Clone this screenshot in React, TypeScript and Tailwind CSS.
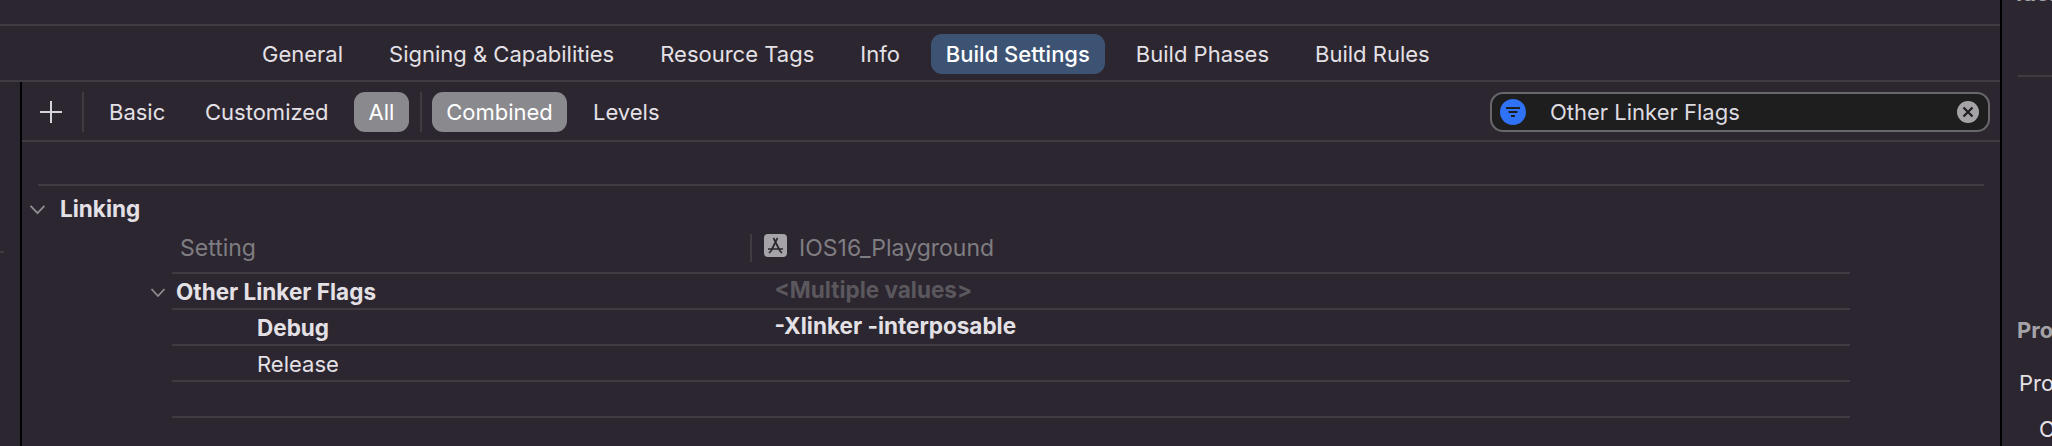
const tabs = ['General', 'Signing & Capabilities', 'Resource Tags', 'Info', 'Build Settings', 'Build Phases', 'Build Rules'];

function Chevron({ className }: { className: string }) {
  return (
    <svg viewBox="0 0 16 10" fill="none" stroke="#8e8c90" strokeWidth="1.8" className={className}>
      <path d="M1.5 1.5 8 8.5l6.5-7" />
    </svg>
  );
}

function AppIcon() {
  return (
    <svg viewBox="0 0 23 23" className="w-[23px] h-[23px] shrink-0 mb-[5px]">
      <rect width="23" height="23" rx="4" fill="#a5a3a7" />
      <path d="M13.5 4 7 17M9.5 4 16 17M4 15h15M5 19l2-2M18 19l-2-2" stroke="#2c2630" strokeWidth="1.7" fill="none" />
    </svg>
  );
}

function Row({ name, value, nameClass, valueClass }: { name?: string; value?: string; nameClass?: string; valueClass?: string }) {
  return (
    <div className="h-9 shrink-0 flex items-center pt-0.5 border-b-2 border-[#403b43] w-[1678px] text-[22px] text-[#e4e1e6]">
      <div className={`w-[602.5px] shrink-0 whitespace-nowrap ${nameClass ?? ''}`}>{name}</div>
      <div className={`whitespace-nowrap ${valueClass ?? ''}`}>{value}</div>
    </div>
  );
}

export default function App() {
  return (
    <div className="w-[2052px] h-[446px] bg-[#2c2630] overflow-hidden flex font-['Inter','Liberation_Sans',sans-serif] text-[#e4e1e6]">
      <div className="w-[2000px] shrink-0 flex flex-col">
        {/* tab bar */}
        <div className="h-[24px] shrink-0 border-b-2 border-[#403b43] box-content" />
        <div className="h-[52px] shrink-0 border-b-2 border-[#403b43] box-content flex items-center pl-[247px] pt-0.5 gap-4 text-[22px]">
          {tabs.map((t) => (
            <div
              key={t}
              className={`h-10 px-[15px] flex items-center rounded-[11px] whitespace-nowrap ${t === 'Build Settings' ? 'bg-[#3d5373] text-white font-medium' : ''}`}
            >
              {t}
            </div>
          ))}
        </div>

        <div className="flex-1 flex min-h-0">
          <div className="w-5 shrink-0 pt-[169px]">
            <div className="w-1 h-0.5 bg-[#403b43]" />
          </div>
          <div className="w-0.5 shrink-0 bg-black" />
          <div className="flex-1 flex flex-col min-w-0">
            {/* filter bar */}
            <div className="h-[56px] shrink-0 border-b-2 border-[#403b43] box-content flex items-center pt-0.5 text-[22px]">
              <div className="w-[62px] h-10 shrink-0 border-r-2 border-[#403b43] flex items-center pl-[18px]">
                <svg viewBox="0 0 22 22" className="w-[22px] h-[22px]" stroke="#d6d3d8" strokeWidth="2">
                  <path d="M11 0v22M0 11h22" />
                </svg>
              </div>
              <div className="pl-[25px] w-[121px] shrink-0">Basic</div>
              <div className="w-[149px] shrink-0">Customized</div>
              <div className="w-[55px] h-10 rounded-[11px] bg-[#8a898e] text-white flex items-center justify-center shrink-0">All</div>
              <div className="w-0.5 h-10 bg-[#403b43] ml-[11px] mr-[10px] shrink-0" />
              <div className="w-[135px] h-10 rounded-[11px] bg-[#8a898e] text-white flex items-center justify-center shrink-0">Combined</div>
              <div className="ml-[26px]">Levels</div>
              <div className="ml-auto mr-[10px] w-[500px] h-10 rounded-[13px] border-2 border-[#69676b] bg-[#1e1e1e] flex items-center pl-2 pr-[9px]">
                <div className="w-[26px] h-[26px] rounded-full bg-[#2f72f5] flex items-center justify-center shrink-0">
                  <svg viewBox="0 0 16 12" className="w-4 h-3" fill="#1e1e1e">
                    <rect x="1" y="1" width="14" height="2" />
                    <rect x="3.5" y="5" width="9" height="2" />
                    <rect x="6" y="9" width="4" height="2" />
                  </svg>
                </div>
                <span className="ml-[24px] text-[#dedbe0]">Other Linker Flags</span>
                <div className="ml-auto w-[22px] h-[22px] rounded-full bg-[#a5a3a7] flex items-center justify-center shrink-0">
                  <svg viewBox="0 0 12 12" className="w-3 h-3" stroke="#1e1e1e" strokeWidth="2.2">
                    <path d="M1.5 1.5l9 9M10.5 1.5l-9 9" />
                  </svg>
                </div>
              </div>
            </div>

            {/* settings table */}
            <div className="h-[42px] shrink-0 w-[1946px] ml-4 border-b-2 border-[#403b43] box-content" />
            <div className="flex-1 flex flex-col">
              <div className="h-[46px] shrink-0 flex items-center font-bold text-[22.5px]">
                <Chevron className="w-[17px] h-[11px] ml-[7px]" />
                <span className="ml-[14px]">Linking</span>
              </div>
              <div className="ml-[150px] flex flex-col">
                <div className="h-[42px] shrink-0 flex items-center border-b-2 border-[#403b43] w-[1678px] pb-2 text-[23px] text-[#7f7d82]">
                  <div className="w-[578px] pl-2 shrink-0">Setting</div>
                  <div className="w-0.5 h-7 bg-[#403b43] mr-[12px] shrink-0" />
                  <AppIcon />
                  <span className="ml-3">IOS16_Playground</span>
                </div>
                <div className="relative">
                  <Chevron className="absolute -left-[22px] top-[13px] w-[16px] h-[11px]" />
                  <Row name="Other Linker Flags" nameClass="font-bold pl-1 text-[22.5px]" value="<Multiple values>" valueClass="font-bold text-[#5a585d] mb-1 text-[22.5px]" />
                </div>
                <Row name="Debug" nameClass="font-bold pl-[85px] text-[22.5px]" value="-Xlinker -interposable" valueClass="font-bold mb-1 text-[22.5px]" />
                <Row name="Release" nameClass="pl-[85px]" />
                <Row />
              </div>
            </div>
          </div>
        </div>
      </div>

      <div className="w-0.5 shrink-0 bg-black" />

      {/* inspector, cut off by the window */}
      <div className="flex-1 min-w-0 overflow-hidden whitespace-nowrap text-[22px]">
        <div className="h-[75px] ml-4 border-b-2 border-[#403b43] box-content relative">
          <div className="absolute -top-[19px] -left-[2px] font-bold text-[#a5a3a7] leading-6">Identity</div>
        </div>
        <div className="pl-[15px] pt-[241px] font-bold text-[#a5a3a7] leading-6">Project</div>
        <div className="pl-[17px] pt-[29px] leading-6">Project</div>
        <div className="pl-[37px] pt-[22px] leading-6">Other</div>
      </div>
    </div>
  );
}
